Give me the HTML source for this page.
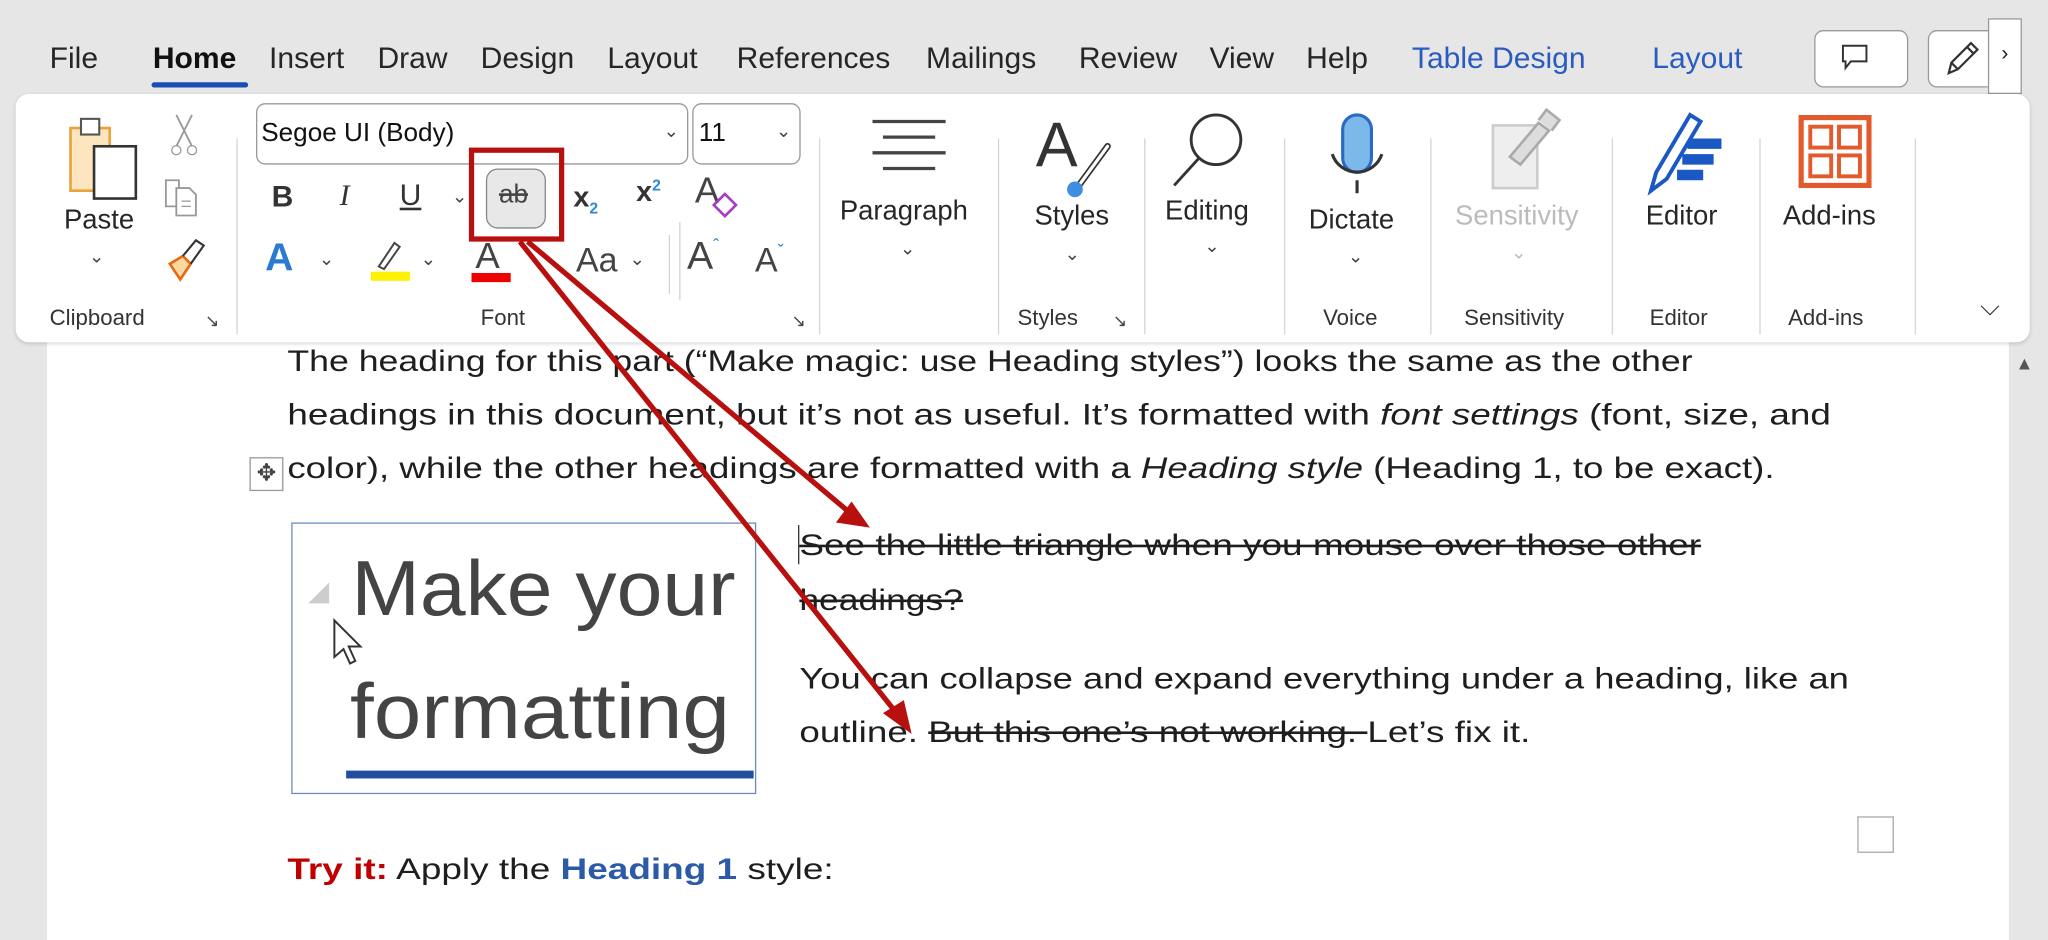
<!DOCTYPE html>
<html><head><meta charset="utf-8"><style>
html,body{margin:0;padding:0;width:2048px;height:940px;overflow:hidden;background:#e6e6e6}
#w{position:absolute;left:0;top:0;width:1568px;height:720px;transform:scale(1.306122);transform-origin:0 0;font-family:"Liberation Sans",sans-serif;color:#222}
.a{position:absolute;white-space:nowrap}
.tab{position:absolute;top:31px;font-size:23px;color:#262626}
.sep{position:absolute;width:1px;background:#d4d4d4}
.lbl{position:absolute;top:234px;font-size:17px;color:#333}
.big{position:absolute;font-size:21px;color:#262626}
.chev{position:absolute;font-size:14px;color:#444}
.doc{font-size:23px;color:#1e1e1e;transform:scaleX(1.21);transform-origin:0 0}
</style></head><body><div id="w">
<!-- tabs -->
<div class="tab" style="left:38px">File</div>
<div class="tab" style="left:117px;color:#111;font-weight:bold">Home</div>
<div style="position:absolute;left:116px;top:63px;width:74px;height:4px;background:#1a4fb0;border-radius:2px"></div>
<div class="tab" style="left:206px">Insert</div>
<div class="tab" style="left:289px">Draw</div>
<div class="tab" style="left:368px">Design</div>
<div class="tab" style="left:465px">Layout</div>
<div class="tab" style="left:564px">References</div>
<div class="tab" style="left:709px">Mailings</div>
<div class="tab" style="left:826px">Review</div>
<div class="tab" style="left:926px">View</div>
<div class="tab" style="left:1000px">Help</div>
<div class="tab" style="left:1081px;color:#2a5bbf">Table Design</div>
<div class="tab" style="left:1265px;color:#2a5bbf">Layout</div>
<div class="a" style="left:1389px;top:23px;width:70px;height:42px;border:1px solid #999;border-radius:7px;background:#fff"></div>
<svg class="a" style="left:1408px;top:32px" width="26" height="26" viewBox="0 0 26 26"><path d="M3 3h18v12H9l-4 5v-5H3z" fill="none" stroke="#333" stroke-width="1.5"/></svg>
<div class="a" style="left:1476px;top:23px;width:70px;height:42px;border:1px solid #999;border-radius:7px;background:#fff"></div>
<svg class="a" style="left:1484px;top:28px" width="34" height="34" viewBox="0 0 34 34"><path d="M8 28l2-8L25 5l5 5-15 15zM10 20l5 5M22 8l5 5" fill="none" stroke="#333" stroke-width="1.7"/></svg>
<div class="a" style="left:1522px;top:14px;width:24px;height:56px;border:1px solid #999;background:#fff;font-size:16px;text-align:center;line-height:54px">›</div>

<!-- page -->
<div class="a" style="left:36px;top:230px;width:1502px;height:490px;background:#fff"></div>
<div class="a" style="left:1543px;top:270px;font-size:14px;color:#555">▲</div>

<!-- ribbon -->
<div class="a" style="left:12px;top:72px;width:1542px;height:190px;background:#fff;border-radius:10px;box-shadow:0 1px 3px rgba(0,0,0,.15)"></div>
<svg class="a" style="left:50px;top:88px" width="60" height="70" viewBox="0 0 60 70"><rect x="4" y="10" width="30" height="48" fill="#fde6bf" stroke="#e8a33a" stroke-width="2"/><rect x="12" y="3" width="14" height="12" fill="#fff" stroke="#555" stroke-width="1.6"/><rect x="22" y="24" width="32" height="40" fill="#fff" stroke="#333" stroke-width="2"/></svg>
<div class="big" style="left:49px;top:157px">Paste</div>
<div class="chev" style="left:68px;top:188px">⌄</div>
<svg class="a" style="left:128px;top:86px" width="26" height="36" viewBox="0 0 26 36"><path d="M7 2l12 24M19 2L7 26" stroke="#999" stroke-width="1.4"/><circle cx="7" cy="29" r="3.5" fill="none" stroke="#999"/><circle cx="19" cy="29" r="3.5" fill="none" stroke="#999"/></svg>
<svg class="a" style="left:124px;top:134px" width="34" height="34" viewBox="0 0 34 34"><path d="M3 4h10v20H3z" fill="none" stroke="#999" stroke-width="1.4"/><path d="M11 10h10l5 5v16H11z" fill="#fff" stroke="#999" stroke-width="1.4"/><path d="M15 20h7M15 24h7" stroke="#999"/></svg>
<svg class="a" style="left:126px;top:182px" width="34" height="36" viewBox="0 0 34 36"><path d="M4 20l10-6 6 6-8 12z" fill="#fbd8a0" stroke="#e66a12" stroke-width="2"/><path d="M14 14l10-12 6 4-10 14" fill="none" stroke="#333" stroke-width="1.6"/></svg>
<div class="lbl" style="left:38px">Clipboard</div>
<div class="a" style="left:157px;top:238px;font-size:13px;color:#444">↘</div>
<div class="sep" style="left:181px;top:106px;height:150px"></div>

<!-- font -->
<div class="a" style="left:196px;top:79px;width:329px;height:45px;border:1px solid #999;border-radius:7px"></div>
<div class="a" style="left:200px;top:91px;font-size:20px;color:#111">Segoe UI (Body)</div>
<div class="chev" style="left:508px;top:92px">⌄</div>
<div class="a" style="left:530px;top:79px;width:81px;height:45px;border:1px solid #999;border-radius:7px"></div>
<div class="a" style="left:535px;top:91px;font-size:20px;color:#111">11</div>
<div class="chev" style="left:594px;top:92px">⌄</div>
<div class="a" style="left:208px;top:137px;font-size:23px;font-weight:bold;color:#333">B</div>
<div class="a" style="left:260px;top:137px;font-size:23px;font-style:italic;font-family:'Liberation Serif',serif;color:#333">I</div>
<div class="a" style="left:306px;top:136px;font-size:23px;text-decoration:underline;color:#333">U</div>
<div class="chev" style="left:346px;top:142px">⌄</div>
<div class="a" style="left:372px;top:129px;width:44px;height:44px;border:1px solid #888;border-radius:9px;background:#e8e8e8"></div>
<div class="a" style="left:382px;top:138px;font-size:20px;text-decoration:line-through;color:#444">ab</div>
<div class="a" style="left:359px;top:113px;border:4px solid #b80f0f;box-sizing:border-box;height:72px;width:73px"></div>
<div class="a" style="left:439px;top:138px;font-size:22px;font-weight:bold;color:#333">x<sub style="font-size:12px;color:#2a8ad4">2</sub></div>
<div class="a" style="left:487px;top:134px;font-size:22px;font-weight:bold;color:#333">x<sup style="font-size:12px;color:#2a8ad4">2</sup></div>
<div class="sep" style="left:520px;top:170px;height:60px"></div>
<div class="a" style="left:532px;top:130px;font-size:28px;color:#444">A</div>
<div class="a" style="left:548px;top:150px;width:10px;height:10px;border:2px solid #a63bc4;transform:rotate(45deg)"></div>
<div class="a" style="left:203px;top:181px;font-size:30px;font-weight:bold;color:#2a7ad4">A</div>
<div class="chev" style="left:244px;top:190px">⌄</div>
<svg class="a" style="left:282px;top:182px" width="34" height="34" viewBox="0 0 34 34"><path d="M8 22l12-18 4 3-12 17z" fill="none" stroke="#444" stroke-width="1.5"/><rect x="2" y="26" width="30" height="7" fill="#fff200"/></svg>
<div class="chev" style="left:322px;top:190px">⌄</div>
<div class="a" style="left:364px;top:180px;font-size:28px;color:#444">A</div>
<div class="a" style="left:361px;top:209px;width:30px;height:7px;background:#e00"></div>
<div class="a" style="left:441px;top:184px;font-size:26px;color:#444">Aa</div>
<div class="chev" style="left:482px;top:190px">⌄</div>
<div class="sep" style="left:512px;top:180px;height:45px"></div>
<div class="a" style="left:526px;top:180px;font-size:30px;color:#444">A<span style="font-size:14px;color:#2a8ad4;vertical-align:top">ˆ</span></div>
<div class="a" style="left:578px;top:184px;font-size:26px;color:#444">A<span style="font-size:14px;color:#2a8ad4;vertical-align:top">ˇ</span></div>
<div class="lbl" style="left:368px">Font</div>
<div class="a" style="left:606px;top:238px;font-size:13px;color:#444">↘</div>
<div class="sep" style="left:627px;top:106px;height:150px"></div>

<!-- paragraph -->
<svg class="a" style="left:666px;top:90px" width="60" height="44" viewBox="0 0 60 44"><path d="M2 3h56M10 15h40M2 27h56M10 39h40" stroke="#444" stroke-width="2.5"/></svg>
<div class="big" style="left:643px;top:150px">Paragraph</div>
<div class="chev" style="left:689px;top:182px">⌄</div>
<div class="sep" style="left:764px;top:106px;height:150px"></div>
<!-- styles -->
<div class="a" style="left:793px;top:84px;font-size:48px;color:#333">A</div>
<svg class="a" style="left:812px;top:108px" width="44" height="44" viewBox="0 0 44 44"><path d="M36 4L14 34" stroke="#333" stroke-width="5" stroke-linecap="round"/><path d="M36 4L14 34" stroke="#fff" stroke-width="2.4" stroke-linecap="round"/><circle cx="11" cy="37" r="6" fill="#3d8ee0"/></svg>
<div class="big" style="left:792px;top:154px">Styles</div>
<div class="chev" style="left:815px;top:186px">⌄</div>
<div class="lbl" style="left:779px">Styles</div>
<div class="a" style="left:852px;top:238px;font-size:13px;color:#444">↘</div>
<div class="sep" style="left:876px;top:106px;height:150px"></div>
<!-- editing -->
<svg class="a" style="left:895px;top:84px" width="64" height="62" viewBox="0 0 64 62"><circle cx="36" cy="23" r="19" fill="none" stroke="#333" stroke-width="2.2"/><path d="M23 37L4 58" stroke="#333" stroke-width="2.2"/></svg>
<div class="big" style="left:892px;top:150px">Editing</div>
<div class="chev" style="left:922px;top:180px">⌄</div>
<div class="sep" style="left:983px;top:106px;height:150px"></div>
<!-- dictate -->
<svg class="a" style="left:1017px;top:84px" width="46" height="66" viewBox="0 0 46 66"><rect x="11" y="4" width="22" height="44" rx="11" fill="#7cb8ea" stroke="#2a6ac4" stroke-width="2.4"/><path d="M3 34a20 20 0 0 0 38 0M22 54v10" fill="none" stroke="#333" stroke-width="2.4"/></svg>
<div class="big" style="left:1002px;top:157px">Dictate</div>
<div class="chev" style="left:1032px;top:188px">⌄</div>
<div class="lbl" style="left:1013px">Voice</div>
<div class="sep" style="left:1095px;top:106px;height:150px"></div>
<!-- sensitivity -->
<svg class="a" style="left:1138px;top:82px" width="62" height="66" viewBox="0 0 62 66"><rect x="5" y="14" width="34" height="48" fill="#eee" stroke="#ccc" stroke-width="2"/><path d="M18 38l22-26 8 6-22 26z" fill="#ddd" stroke="#aaa" stroke-width="2"/><path d="M40 10l6-8 10 8-6 8" fill="#ddd" stroke="#aaa" stroke-width="2"/></svg>
<div class="big" style="left:1114px;top:154px;color:#bbb">Sensitivity</div>
<div class="chev" style="left:1157px;top:185px;color:#bbb">⌄</div>
<div class="lbl" style="left:1121px">Sensitivity</div>
<div class="sep" style="left:1234px;top:106px;height:150px"></div>
<!-- editor -->
<svg class="a" style="left:1258px;top:84px" width="66" height="66" viewBox="0 0 66 66"><path d="M34 22h26v8H34zM30 34h24v8H30zM26 46h20v8H26z" fill="#1a58c4"/><path d="M6 62l4-14 26-44 8 5-26 44z" fill="#fff" stroke="#1a58c4" stroke-width="3"/></svg>
<div class="big" style="left:1260px;top:154px">Editor</div>
<div class="lbl" style="left:1263px">Editor</div>
<div class="sep" style="left:1347px;top:106px;height:150px"></div>
<!-- add-ins -->
<svg class="a" style="left:1377px;top:88px" width="56" height="56" viewBox="0 0 56 56"><rect x="2" y="2" width="52" height="52" fill="none" stroke="#e35b2d" stroke-width="4"/><rect x="9" y="9" width="16" height="16" fill="none" stroke="#e35b2d" stroke-width="3"/><rect x="31" y="9" width="16" height="16" fill="none" stroke="#e35b2d" stroke-width="3"/><rect x="9" y="31" width="16" height="16" fill="none" stroke="#e35b2d" stroke-width="3"/><rect x="31" y="31" width="16" height="16" fill="none" stroke="#e35b2d" stroke-width="3"/></svg>
<div class="big" style="left:1365px;top:154px">Add-ins</div>
<div class="lbl" style="left:1369px">Add-ins</div>
<div class="sep" style="left:1466px;top:106px;height:150px"></div>
<div class="a" style="left:1516px;top:224px;font-size:20px;color:#333">⌵</div>

<!-- document -->
<div class="a doc" style="left:220px;top:263px;transform:scaleX(1.187)">The heading for this part (“Make magic: use Heading styles”) looks the same as the other</div>
<div class="a doc" style="left:220px;top:304px;transform:scaleX(1.227)">headings in this document, but it’s not as useful. It’s formatted with <i>font settings</i> (font, size, and</div>
<div class="a doc" style="left:220px;top:345px;transform:scaleX(1.22)">color), while the other headings are formatted with a <i>Heading style</i> (Heading 1, to be exact).</div>
<div class="a" style="left:191px;top:350px;width:24px;height:24px;border:1px solid #999;background:#fff;font-size:18px;text-align:center;line-height:22px;color:#444">✥</div>

<div class="a" style="left:223px;top:400px;width:354px;height:206px;border:1.5px solid #6a8cc0;background:#fff;overflow:hidden"></div>
<div class="a" style="left:236px;top:446px;width:0;height:0;border-left:16px solid transparent;border-bottom:16px solid #ccc"></div>
<div class="a" style="left:269px;top:416px;font-size:60px;color:#444;transform:scaleX(1.05);transform-origin:0 0">Make your</div>
<div class="a" style="left:268px;top:510px;font-size:60px;color:#444;transform:scaleX(1.09);transform-origin:0 0">formatting</div>
<div class="a" style="left:265px;top:590px;width:312px;height:6px;background:#214f9e"></div>
<svg class="a" style="left:253px;top:472px" width="26" height="42" viewBox="0 0 26 42"><path d="M3 3v28l7-6 5 11 4-2-5-11h9z" fill="#fff" stroke="#333" stroke-width="1.5"/></svg>

<div class="a" style="left:611px;top:402px;width:1px;height:30px;background:#333"></div>
<div class="a doc" style="left:612px;top:404px;text-decoration:line-through;transform:scaleX(1.23)">See the little triangle when you mouse over those other</div>
<div class="a doc" style="left:612px;top:446px;text-decoration:line-through;transform:scaleX(1.18)">headings?</div>
<div class="a doc" style="left:612px;top:506px;transform:scaleX(1.21)">You can collapse and expand everything under a heading, like an</div>
<div class="a doc" style="left:612px;top:547px;transform:scaleX(1.225)">outline. <span style="text-decoration:line-through">But this one’s not working. </span>Let’s fix it.</div>

<div class="a" style="left:1422px;top:625px;width:26px;height:26px;border:1.5px solid #aaa"></div>
<div class="a doc" style="left:220px;top:652px;transform:scaleX(1.23)"><b style="color:#c00000">Try it:</b> Apply the <b style="color:#2a5aa8">Heading 1</b> style:</div>

<!-- arrows -->
<svg class="a" style="left:0;top:0" width="1568" height="720" viewBox="0 0 1568 720">
<path d="M404 185L650 392M398 185L688 548" stroke="#b80f0f" stroke-width="4" fill="none"/>
<path d="M666 404l-26-4 12-16z" fill="#b80f0f"/>
<path d="M698 562l-22-16 16-10z" fill="#b80f0f"/>
</svg>
</div></body></html>
